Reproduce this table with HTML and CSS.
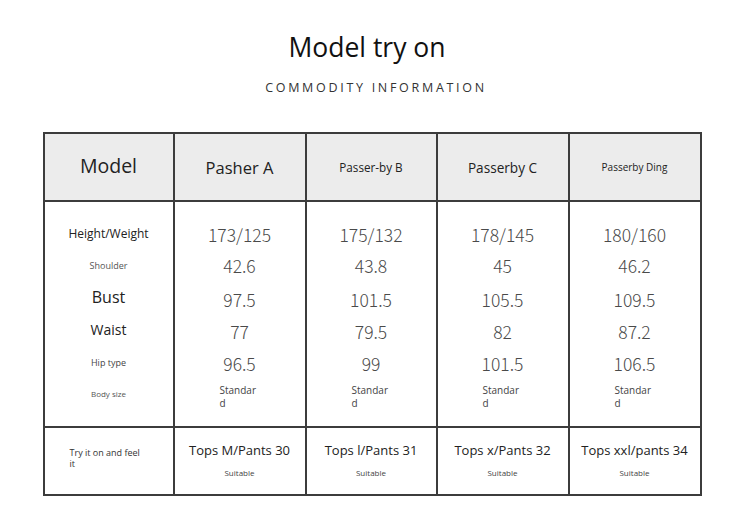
FILE: index.html
```html
<!DOCTYPE html>
<html>
<head>
<meta charset="utf-8">
<link rel="stylesheet" href="styles.css">
</head>
<body>
<div class="page">
  <h1 class="title">Model try on</h1>
  <div class="subtitle">COMMODITY INFORMATION</div>
  <div class="table">
    <div class="cell head"><span class="h-model">Model</span></div>
    <div class="cell head"><span class="h-a">Pasher A</span></div>
    <div class="cell head"><span class="h-b">Passer-by B</span></div>
    <div class="cell head"><span class="h-c">Passerby C</span></div>
    <div class="cell head"><span class="h-d">Passerby Ding</span></div>

    <div class="cell body labels">
      <div class="line l-hw">Height/Weight</div>
      <div class="line l-sh">Shoulder</div>
      <div class="line l-bust">Bust</div>
      <div class="line l-waist">Waist</div>
      <div class="line l-hip">Hip type</div>
      <div class="line l-body">Body size</div>
    </div>
    <div class="cell body values">
      <div class="line">173/125</div>
      <div class="line">42.6</div>
      <div class="line">97.5</div>
      <div class="line">77</div>
      <div class="line">96.5</div>
      <div class="std">Standard</div>
    </div>
    <div class="cell body values">
      <div class="line">175/132</div>
      <div class="line">43.8</div>
      <div class="line">101.5</div>
      <div class="line">79.5</div>
      <div class="line">99</div>
      <div class="std">Standard</div>
    </div>
    <div class="cell body values">
      <div class="line">178/145</div>
      <div class="line">45</div>
      <div class="line">105.5</div>
      <div class="line">82</div>
      <div class="line">101.5</div>
      <div class="std">Standard</div>
    </div>
    <div class="cell body values">
      <div class="line">180/160</div>
      <div class="line">46.2</div>
      <div class="line">109.5</div>
      <div class="line">87.2</div>
      <div class="line">106.5</div>
      <div class="std">Standard</div>
    </div>

    <div class="cell foot first"><div class="try">Try it on and feel it</div></div>
    <div class="cell foot"><div class="size">Tops M/Pants 30</div><div class="fit">Suitable</div></div>
    <div class="cell foot"><div class="size">Tops l/Pants 31</div><div class="fit">Suitable</div></div>
    <div class="cell foot"><div class="size">Tops x/Pants 32</div><div class="fit">Suitable</div></div>
    <div class="cell foot"><div class="size">Tops xxl/pants 34</div><div class="fit">Suitable</div></div>
  </div>
</div>
</body>
</html>
```
FILE: styles.css
```css
* { box-sizing: border-box; }
html, body { margin: 0; padding: 0; background: #fff; }
body {
  font-family: "Open Sans", "Noto Sans", sans-serif;
  color: #222;
  width: 750px;
  height: 524px;
  overflow: hidden;
}
.page {
  display: flex;
  flex-direction: column;
  align-items: center;
  padding-top: 29px;
}
.title {
  margin: 0;
  font-size: 26.5px;
  font-weight: 400;
  line-height: 36px;
  color: #111;
  padding-right: 16px;
}
.subtitle {
  margin-top: 15px;
  font-size: 12.5px;
  letter-spacing: 2.7px;
  line-height: 16px;
  color: #333;
  padding-left: 2px;
}
.table {
  margin-top: 36px;
  margin-left: -6px;
  width: 659px;
  display: grid;
  grid-template-columns: 130px 132px 131px 132px 132px;
  grid-template-rows: 68px 226px 68px;
  border-left: 2px solid #3c3c3c;
  border-top: 2px solid #3c3c3c;
}
.cell {
  border-right: 2px solid #3c3c3c;
  border-bottom: 2px solid #3c3c3c;
}
.head {
  background: #ececec;
  display: flex;
  align-items: center;
  justify-content: center;
  color: #222;
}
.h-model { font-size: 19.5px; margin-top: -3px; }
.h-a { font-size: 16.5px; }
.h-b { font-size: 11.7px; }
.h-c { font-size: 13.6px; }
.h-d { font-size: 10px; }

.body {
  display: flex;
  flex-direction: column;
  padding-top: 15px;
}
.labels { padding-top: 15px; }
.line {
  height: 32px;
  display: flex;
  align-items: center;
  justify-content: center;
}
.labels .line { color: #222; }
.l-hw { font-size: 12px; }
.l-sh { font-size: 9px; color: #555 !important; }
.l-bust { font-size: 16px; }
.l-waist { font-size: 14px; }
.l-hip { font-size: 9px; color: #444 !important; margin-top: 1px; margin-bottom: -1px; }
.l-body { font-size: 8px; color: #555 !important; }
.values .line {
  font-family: "Noto Sans CJK SC", "Open Sans", sans-serif;
  font-size: 17.5px;
  font-weight: 300;
  color: #4a4a4a;
}
.values .line:first-child { margin-top: 1px; margin-bottom: -1px; }
.values .line:nth-child(3) { margin-top: 2px; }
.std {
  margin-left: 45px;
  width: 40px;
  font-size: 10px;
  line-height: 13px;
  word-break: break-all;
  color: #444;
  margin-top: 5px;
}

.foot {
  display: flex;
  flex-direction: column;
  align-items: center;
  justify-content: center;
  padding-bottom: 2px;
}
.foot.first {
  align-items: flex-start;
  padding-left: 25px;
  padding-bottom: 6px;
}
.try {
  width: 78px;
  font-size: 9px;
  line-height: 11px;
  color: #333;
}
.size {
  font-size: 13px;
  line-height: 18px;
  color: #222;
}
.fit {
  margin-top: 8px;
  font-size: 8px;
  line-height: 12px;
  color: #444;
}
```
